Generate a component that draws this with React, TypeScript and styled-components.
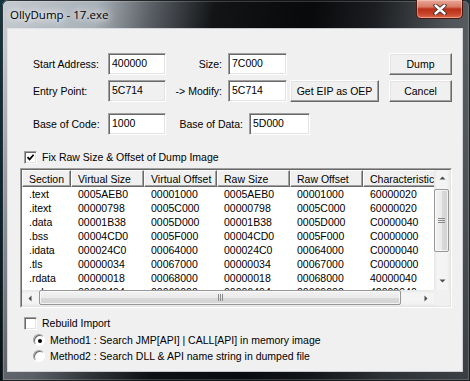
import React from 'react';
import styled, { createGlobalStyle } from 'styled-components';

const GlobalStyle = createGlobalStyle`
  html, body { margin: 0; padding: 0; overflow: hidden; }
  body { background: #08161b; }
`;

const Desktop = styled.div`
  width: 470px;
  height: 381px;
  overflow: hidden;
  display: flex;
  background: linear-gradient(180deg, #123640 0%, #0a2a33 50%, #061219 100%);
`;

const Frame = styled.div`
  margin-left: 2px;
  width: 468px;
  height: 381px;
  display: flex;
  flex-direction: column;
  border-radius: 6px 6px 0 0;
  box-shadow: inset 0 0 0 1px rgba(10, 12, 14, 0.8), inset 0 0 0 2px rgba(255, 255, 255, 0.18);
  background:
    linear-gradient(180deg, rgba(0, 0, 0, 0) 0%, rgba(0, 0, 0, 0) 12%, rgba(10, 14, 18, 0.5) 100%),
    linear-gradient(100deg, #c3cad0 0%, #a9b1b8 18%, #5b6066 28%, #121416 40%, #08090b 58%, #1b1d20 70%, #4f5458 84%, #6d7276 100%);
`;

const TitleBar = styled.div`
  height: 29px;
  display: flex;
  align-items: flex-start;
`;

const Title = styled.div`
  margin: 7px 0 0 8px;
  font-family: "Open Sans", "DejaVu Sans", sans-serif;
  font-size: 11.5px;
  line-height: 16px;
  color: #000;
  text-shadow: 0 0 6px #fff, 0 0 10px rgba(255, 255, 255, 0.9), 0 0 14px rgba(255, 255, 255, 0.7);
`;

const CloseButton = styled.div`
  margin-left: auto;
  margin-right: 7px;
  width: 47px;
  height: 19px;
  box-sizing: border-box;
  border: 1px solid #4a1a12;
  border-top: none;
  border-radius: 0 0 5px 5px;
  background: linear-gradient(180deg, #e9a898 0%, #d77a64 38%, #b8301a 50%, #c8442a 78%, #dd6b4c 100%);
  box-shadow: inset 0 0 0 1px rgba(255, 220, 210, 0.45);
  display: flex;
  align-items: center;
  justify-content: center;
`;

const Client = styled.div`
  margin: 0 8px 0 6px;
  height: 342px;
  background: #f0f0f0;
  outline: 1px solid rgba(230, 234, 238, 0.85);
  font-family: "Liberation Sans", Arial, sans-serif;
  font-size: 10.5px;
  color: #000;
  display: flex;
  flex-direction: column;
`;

const FormRow = styled.div<{ $top: number }>`
  margin-top: ${p => p.$top}px;
  padding-left: 25px;
  height: 22px;
  display: flex;
  align-items: stretch;
`;

const Label = styled.div<{ $w: number; $right?: boolean }>`
  width: ${p => p.$w}px;
  box-sizing: border-box;
  padding-right: ${p => (p.$right ? 6 : 0)}px;
  display: flex;
  align-items: center;
  justify-content: ${p => (p.$right ? 'flex-end' : 'flex-start')};
  white-space: nowrap;
`;

const Field = styled.div<{ $w: number; $disabled?: boolean }>`
  width: ${p => p.$w}px;
  box-sizing: border-box;
  border: 1px solid;
  border-color: #a0a0a0 #ffffff #ffffff #a0a0a0;
  box-shadow: inset 1px 1px 0 #696969, inset -1px -1px 0 #e3e3e3;
  background: ${p => (p.$disabled ? '#f0f0f0' : '#ffffff')};
  padding: 2px 0 0 3px;
  line-height: 14px;
`;

const Button = styled.div<{ $w: number; $left: number }>`
  width: ${p => p.$w}px;
  margin-left: ${p => p.$left}px;
  box-sizing: border-box;
  border: 1px solid;
  border-color: #ffffff #696969 #696969 #ffffff;
  box-shadow: inset -1px -1px 0 #a0a0a0, inset 1px 1px 0 #e3e3e3;
  background: #f0f0f0;
  display: flex;
  align-items: center;
  justify-content: center;
`;

const CheckRow = styled.div<{ $top: number }>`
  margin-top: ${p => p.$top}px;
  padding-left: 16px;
  height: 14px;
  display: flex;
  align-items: center;
  gap: 5px;
`;

const CheckBox = styled.div`
  width: 13px;
  height: 13px;
  box-sizing: border-box;
  border: 1px solid;
  border-color: #a0a0a0 #ffffff #ffffff #a0a0a0;
  box-shadow: inset 1px 1px 0 #696969, inset -1px -1px 0 #e3e3e3;
  background: #fff;
  display: flex;
  align-items: center;
  justify-content: center;
`;

const RadioRow = styled.div<{ $top: number }>`
  margin-top: ${p => p.$top}px;
  padding-left: 25px;
  height: 16px;
  display: flex;
  align-items: center;
  gap: 5px;
`;

const Radio = styled.div<{ $on?: boolean }>`
  width: 12px;
  height: 12px;
  box-sizing: border-box;
  border-radius: 50%;
  border: 1px solid;
  border-color: #a0a0a0 #ffffff #ffffff #a0a0a0;
  background: #fff;
  box-shadow: inset 1px 1px 0 #696969;
  display: flex;
  align-items: center;
  justify-content: center;
  &::after {
    content: '';
    display: ${p => (p.$on ? 'block' : 'none')};
    width: 4px;
    height: 4px;
    border-radius: 50%;
    background: #000;
    margin: 1px 0 0 1px;
  }
`;

const ListOuter = styled.div`
  margin: 4px 0 0 12px;
  width: 432px;
  height: 140px;
  box-sizing: border-box;
  border: 1px solid;
  border-color: #a0a0a0 #ffffff #ffffff #a0a0a0;
`;

const ListInner = styled.div`
  height: 100%;
  box-sizing: border-box;
  border: 1px solid;
  border-color: #696969 #e3e3e3 #e3e3e3 #696969;
  background: #fff;
  display: grid;
  grid-template-columns: 412px 16px;
  grid-template-rows: 120px 16px;
`;

const Viewport = styled.div`
  overflow: hidden;
`;

const HeaderRow = styled.div`
  height: 17px;
  display: flex;
  width: max-content;
`;

const HeaderCell = styled.div<{ $w: number }>`
  width: ${p => p.$w}px;
  flex: none;
  box-sizing: border-box;
  padding-left: 6px;
  border: 1px solid;
  border-color: #ffffff #696969 #696969 #ffffff;
  box-shadow: inset -1px -1px 0 #a0a0a0;
  background: #f0f0f0;
  display: flex;
  align-items: center;
  white-space: nowrap;
  overflow: hidden;
`;

const DataRow = styled.div`
  height: 14px;
  display: flex;
  width: max-content;
`;

const DataCell = styled.div<{ $w: number }>`
  width: ${p => p.$w}px;
  flex: none;
  box-sizing: border-box;
  padding-left: 7px;
  line-height: 14px;
  white-space: nowrap;
  overflow: hidden;
`;

const VScroll = styled.div`
  display: flex;
  flex-direction: column;
  background: linear-gradient(90deg, #e6e6e6 0%, #f4f4f4 20%, #f4f4f4 80%, #e9e9e9 100%);
`;

const HScroll = styled.div`
  display: flex;
  background: linear-gradient(180deg, #e6e6e6 0%, #f4f4f4 20%, #f4f4f4 80%, #e9e9e9 100%);
`;

const ArrowBox = styled.div`
  width: 16px;
  height: 17px;
  flex: none;
  display: flex;
  align-items: center;
  justify-content: center;
`;

const Track = styled.div<{ $vertical?: boolean }>`
  flex: 1;
  display: flex;
  flex-direction: ${p => (p.$vertical ? 'column' : 'row')};
`;

const Thumb = styled.div<{ $vertical?: boolean; $offset: number; $size: number }>`
  ${p =>
    p.$vertical
      ? `margin-top: ${p.$offset}px; height: ${p.$size}px; width: 15px; margin-left: 0;`
      : `margin-left: ${p.$offset}px; width: ${p.$size}px; height: 15px; margin-top: 0;`}
  box-sizing: border-box;
  border: 1px solid #979797;
  border-radius: 2px;
  background: ${p =>
    p.$vertical
      ? 'linear-gradient(90deg, #f2f2f2 0%, #ebebeb 50%, #d9d9d9 51%, #d4d4d4 100%)'
      : 'linear-gradient(180deg, #f2f2f2 0%, #ebebeb 50%, #d9d9d9 51%, #d4d4d4 100%)'};
  box-shadow: inset 0 0 0 1px rgba(255, 255, 255, 0.7);
  display: flex;
  align-items: center;
  justify-content: center;
`;

const Corner = styled.div`
  background: #f0f0f0;
`;

const cols = [49, 73, 73, 73, 73, 73];
const headers = ['Section', 'Virtual Size', 'Virtual Offset', 'Raw Size', 'Raw Offset', 'Characteristics'];
const sections = [
  ['.text', '0005AEB0', '00001000', '0005AEB0', '00001000', '60000020'],
  ['.itext', '00000798', '0005C000', '00000798', '0005C000', '60000020'],
  ['.data', '00001B38', '0005D000', '00001B38', '0005D000', 'C0000040'],
  ['.bss', '00004CD0', '0005F000', '00004CD0', '0005F000', 'C0000000'],
  ['.idata', '000024C0', '00064000', '000024C0', '00064000', 'C0000040'],
  ['.tls', '00000034', '00067000', '00000034', '00067000', 'C0000000'],
  ['.rdata', '00000018', '00068000', '00000018', '00068000', '40000040'],
  ['.reloc', '00006494', '00069000', '00006494', '00069000', '42000040'],
];

const Arrow = ({ dir }: { dir: 'up' | 'down' | 'left' | 'right' }) => {
  const pts = {
    up: '0.5,4.5 3.5,1.5 6.5,4.5',
    down: '0.5,1.5 3.5,4.5 6.5,1.5',
    left: '4.5,0.5 1.5,3.5 4.5,6.5',
    right: '1.5,0.5 4.5,3.5 1.5,6.5',
  }[dir];
  return (
    <svg width="7" height="7" viewBox="0 0 7 7">
      <polygon points={pts} fill="#4d4d4d" />
    </svg>
  );
};

const Grip = ({ vertical }: { vertical?: boolean }) =>
  vertical ? (
    <svg width="7" height="7" viewBox="0 0 7 7">
      <path d="M0 1.5h7M0 3.5h7M0 5.5h7" stroke="#8a8a8a" strokeWidth="1" />
    </svg>
  ) : (
    <svg width="7" height="7" viewBox="0 0 7 7">
      <path d="M1.5 0v7M3.5 0v7M5.5 0v7" stroke="#8a8a8a" strokeWidth="1" />
    </svg>
  );

const CheckMark = () => (
  <svg width="9" height="9" viewBox="0 0 9 9">
    <path d="M1.5 4.2 L3.6 6.4 L7.6 1.8" fill="none" stroke="#000" strokeWidth="1.7" />
  </svg>
);

const CloseGlyph = () => (
  <svg width="14" height="11" viewBox="0 0 14 11">
    <path d="M2.5 1.5 L11.5 9.5 M11.5 1.5 L2.5 9.5" stroke="#3a2a28" strokeWidth="4.2" strokeLinecap="round" />
    <path d="M2.5 1.5 L11.5 9.5 M11.5 1.5 L2.5 9.5" stroke="#ffffff" strokeWidth="2.4" strokeLinecap="round" />
  </svg>
);

export default function App() {
  return (
    <>
      <GlobalStyle />
      <Desktop>
        <Frame>
          <TitleBar>
            <Title>OllyDump - 17.exe</Title>
            <CloseButton>
              <CloseGlyph />
            </CloseButton>
          </TitleBar>
          <Client>
            <FormRow $top={24}>
              <Label $w={75}>Start Address:</Label>
              <Field $w={58}>400000</Field>
              <Label $w={62} $right>Size:</Label>
              <Field $w={59}>7C000</Field>
              <Button $w={63} $left={102}>Dump</Button>
            </FormRow>
            <FormRow $top={5}>
              <Label $w={75}>Entry Point:</Label>
              <Field $w={58} $disabled>5C714</Field>
              <Label $w={62} $right>-&gt; Modify:</Label>
              <Field $w={59}>5C714</Field>
              <Button $w={89} $left={3}>Get EIP as OEP</Button>
              <Button $w={63} $left={10}>Cancel</Button>
            </FormRow>
            <FormRow $top={11}>
              <Label $w={75}>Base of Code:</Label>
              <Field $w={58}>1000</Field>
              <Label $w={83} $right>Base of Data:</Label>
              <Field $w={61}>5D000</Field>
            </FormRow>
            <CheckRow $top={15}>
              <CheckBox>
                <CheckMark />
              </CheckBox>
              Fix Raw Size &amp; Offset of Dump Image
            </CheckRow>
            <ListOuter>
              <ListInner>
                <Viewport>
                  <HeaderRow>
                    {headers.map((h, i) => (
                      <HeaderCell key={h} $w={cols[i]}>{h}</HeaderCell>
                    ))}
                  </HeaderRow>
                  {sections.map(row => (
                    <DataRow key={row[0]}>
                      {row.map((v, i) => (
                        <DataCell key={i} $w={cols[i]}>{v}</DataCell>
                      ))}
                    </DataRow>
                  ))}
                </Viewport>
                <VScroll>
                  <ArrowBox><Arrow dir="up" /></ArrowBox>
                  <Track $vertical>
                    <Thumb $vertical $offset={2} $size={63}>
                      <Grip vertical />
                    </Thumb>
                  </Track>
                  <ArrowBox><Arrow dir="down" /></ArrowBox>
                </VScroll>
                <HScroll>
                  <ArrowBox><Arrow dir="left" /></ArrowBox>
                  <Track>
                    <Thumb $offset={1} $size={362}>
                      <Grip />
                    </Thumb>
                  </Track>
                  <ArrowBox><Arrow dir="right" /></ArrowBox>
                </HScroll>
                <Corner />
              </ListInner>
            </ListOuter>
            <CheckRow $top={8}>
              <CheckBox />
              Rebuild Import
            </CheckRow>
            <RadioRow $top={2}>
              <Radio $on />
              Method1 : Search JMP[API] | CALL[API] in memory image
            </RadioRow>
            <RadioRow $top={0}>
              <Radio />
              Method2 : Search DLL &amp; API name string in dumped file
            </RadioRow>
          </Client>
        </Frame>
      </Desktop>
    </>
  );
}
